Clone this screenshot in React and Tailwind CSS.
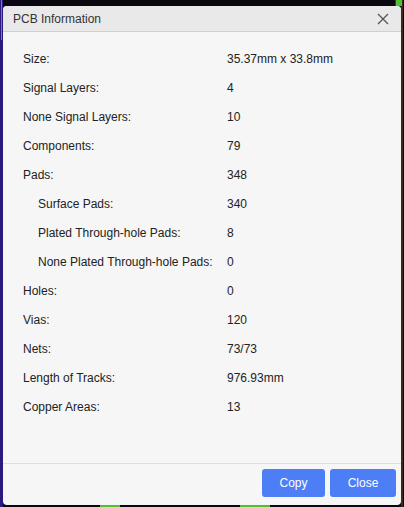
import React from "react";

const rows = [
  { label: "Size:", value: "35.37mm x 33.8mm" },
  { label: "Signal Layers:", value: "4" },
  { label: "None Signal Layers:", value: "10" },
  { label: "Components:", value: "79" },
  { label: "Pads:", value: "348" },
  { label: "Surface Pads:", value: "340", sub: true },
  { label: "Plated Through-hole Pads:", value: "8", sub: true },
  { label: "None Plated Through-hole Pads:", value: "0", sub: true },
  { label: "Holes:", value: "0" },
  { label: "Vias:", value: "120" },
  { label: "Nets:", value: "73/73" },
  { label: "Length of Tracks:", value: "976.93mm" },
  { label: "Copper Areas:", value: "13" },
];

const PcbInformation = () => {
  return (
    <div className="relative w-[404px] h-[507px] bg-[#0b0710] overflow-hidden font-['Liberation_Sans',Arial,sans-serif]">
      {/* canvas traces behind the dialog */}
      <div className="absolute left-0 top-0 w-[3px] h-full bg-[#2a1a80]" />
      <div className="absolute left-[1px] top-0 w-[1px] h-[40px] bg-[#a08020]" />
      <div className="absolute right-[1px] top-0 w-[2px] h-full bg-[#3a2a20]" />
      <div className="absolute right-[6px] top-0 w-[3px] h-[6px] bg-[#6a1a70]" />
      <div className="absolute right-[2px] top-0 w-[6px] h-[6px] bg-[#4fc030]" />
      <div className="absolute left-[100px] bottom-0 w-[20px] h-[2px] bg-[#4fc030]" />
      <div className="absolute left-[240px] bottom-0 w-[30px] h-[2px] bg-[#4fc030]" />

      <div className="absolute left-[3px] top-[6px] w-[398px] h-[499px] flex flex-col rounded-[4px] bg-[#f6f6f6] overflow-hidden">
        {/* Header */}
        <div className="h-[26px] flex items-center justify-between pl-[10px] pr-[12px] bg-[#e9e9e9] border-b border-[#d0d0d0]">
          <span className="text-[12px] text-[#333]">PCB Information</span>
          <svg width="12" height="12" viewBox="0 0 12 12" className="text-[#555]">
            <path d="M1 1L11 11M11 1L1 11" stroke="currentColor" strokeWidth="1.3" />
          </svg>
        </div>

        {/* Body */}
        <div className="flex-1 pt-[12px] pl-[20px]">
          {rows.map((row, index) => (
            <div key={index} className="h-[29px] flex items-center text-[12px] text-[#222] whitespace-nowrap">
              <div className={`w-[204px] ${row.sub ? "pl-[15px]" : ""}`}>{row.label}</div>
              <div>{row.value}</div>
            </div>
          ))}
        </div>

        {/* Footer */}
        <div className="h-[42px] flex items-start justify-end gap-[5px] pt-[5px] pr-[5px] border-t border-[#dedede]">
          <button className="w-[63px] h-[28px] rounded-[3px] bg-[#4d7ef6] text-white text-[12px]">
            Copy
          </button>
          <button className="w-[66px] h-[28px] rounded-[3px] bg-[#4d7ef6] text-white text-[12px]">
            Close
          </button>
        </div>
      </div>
    </div>
  );
};

export default function App() {
  return <PcbInformation />;
}
